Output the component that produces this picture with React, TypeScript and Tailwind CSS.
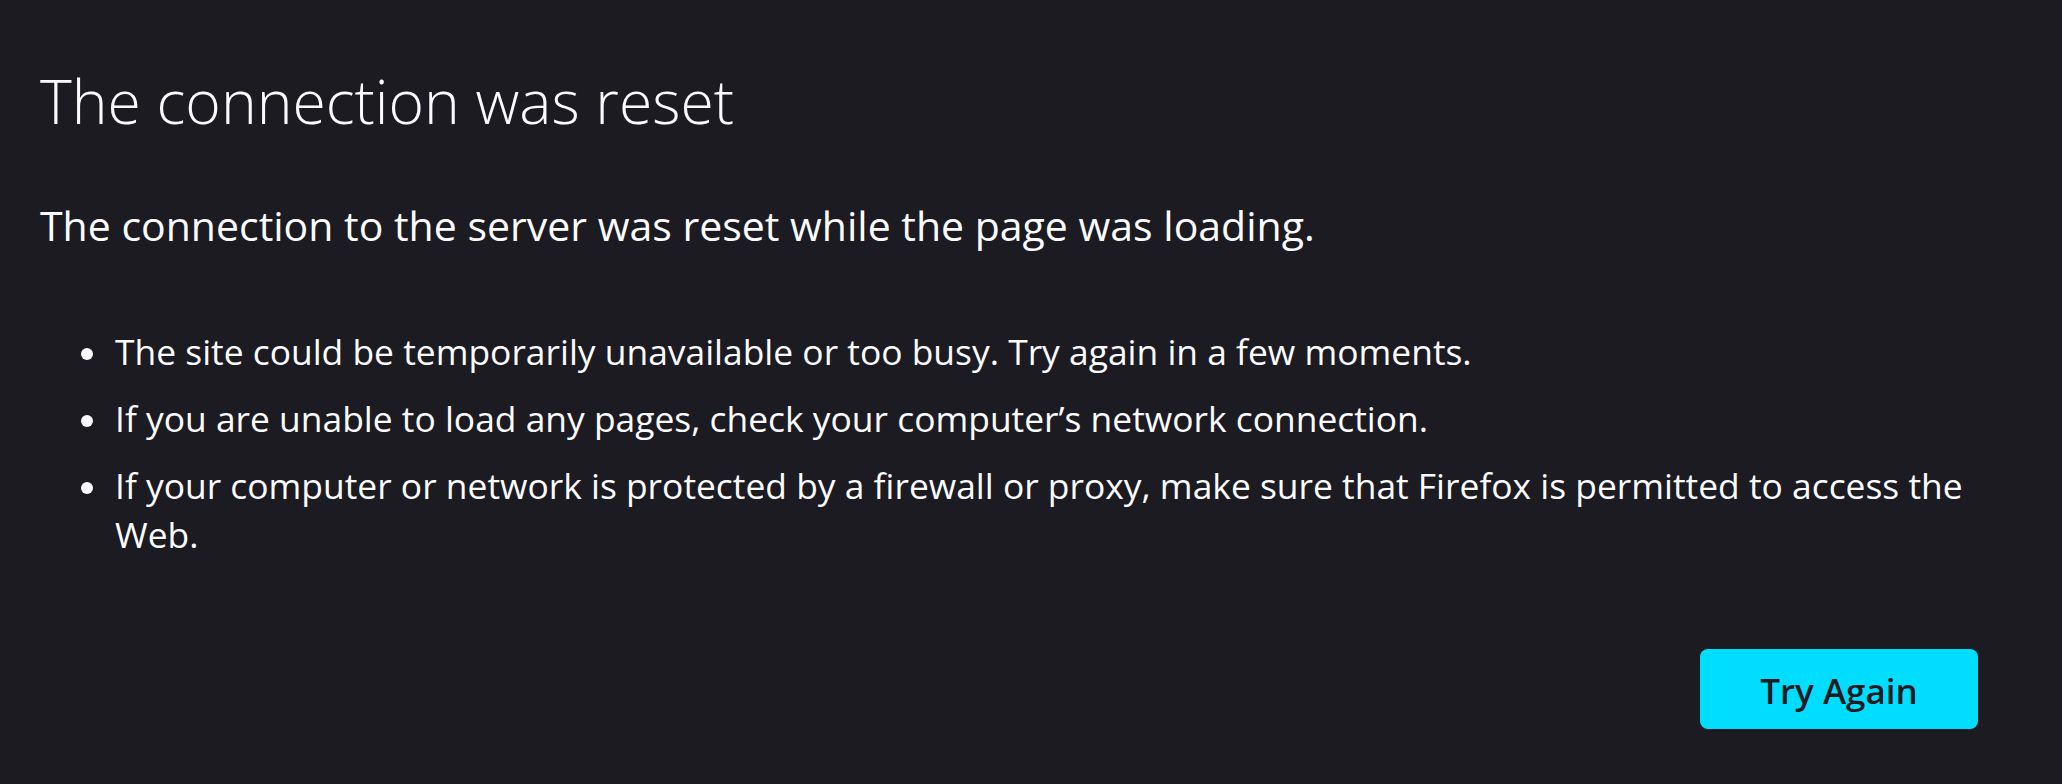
const items = [
  "The site could be temporarily unavailable or too busy. Try again in a few moments.",
  "If you are unable to load any pages, check your computer\u2019s network connection.",
];

export default function App() {
  return (
    <div className="min-h-[784px] w-full bg-[#1c1b22] text-[#fbfbfe] font-['Open_Sans',sans-serif]">
      <div className="pl-[40px] pr-[40px] pt-[65px]">
        <h1 className="text-[60.6px] leading-[72px] font-light">The connection was reset</h1>

        <p className="mt-[60px] text-[41px] leading-[56px]">
          The connection to the server was reset while the page was loading.
        </p>

        <ul className="mt-[74px] flex flex-col gap-[18px] text-[35.4px] leading-[49px]">
          {items.map((t) => (
            <li key={t} className="flex items-start">
              <span className="ml-[41px] mt-[21px] h-[12px] w-[12px] shrink-0 rounded-full bg-[#fbfbfe]" />
              <span className="ml-[22px]">{t}</span>
            </li>
          ))}
          <li className="flex items-start">
            <span className="ml-[41px] mt-[21px] h-[12px] w-[12px] shrink-0 rounded-full bg-[#fbfbfe]" />
            <span className="ml-[22px]">
              If your computer or network is protected by a firewall or proxy, make sure that Firefox is
              permitted to access the
              <br />
              Web.
            </span>
          </li>
        </ul>

        <div className="mt-[90px] flex justify-end pr-[44px]">
          <button className="h-[80px] w-[278px] rounded-[8px] bg-[#00ddff] pt-[4px] text-[35px] font-semibold text-[#1c1b22]">
            Try Again
          </button>
        </div>
      </div>
    </div>
  );
}
